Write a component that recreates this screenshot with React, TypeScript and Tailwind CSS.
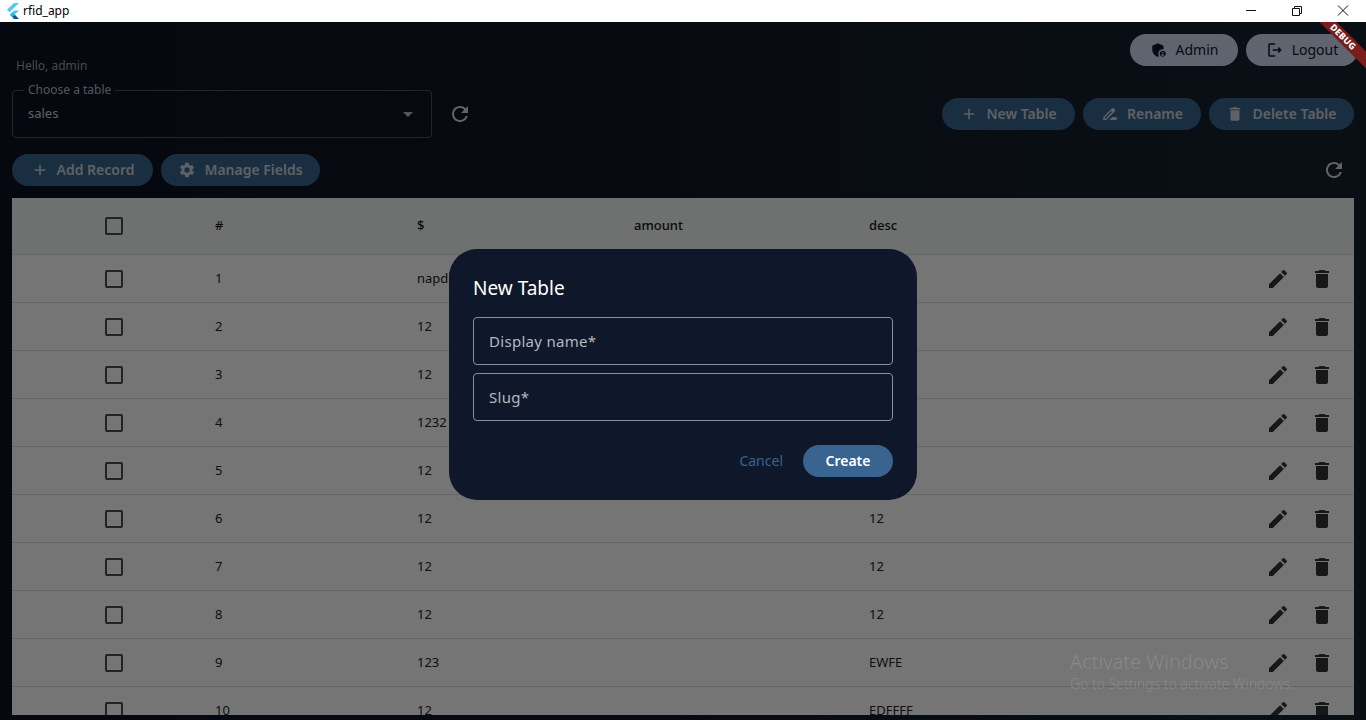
import { MdAdd, MdSettings, MdRefresh, MdEdit, MdDelete, MdOutlineLogout, MdAdminPanelSettings, MdArrowDropDown, MdDriveFileRenameOutline } from 'react-icons/md';

const font = "font-['Noto_Sans',sans-serif]";

const rows: [string, string, string][] = [
  ['1', 'napdi', ''],
  ['2', '12', ''],
  ['3', '12', ''],
  ['4', '1232', ''],
  ['5', '12', ''],
  ['6', '12', '12'],
  ['7', '12', '12'],
  ['8', '12', '12'],
  ['9', '123', 'EWFE'],
  ['10', '12', 'EDFFFF'],
];

function Check() {
  return <div className="w-[18px] h-[18px] rounded-[2px] border-2 border-[#4a4c52]" />;
}

function Fill({ icon, label, w }: { icon: React.ReactNode; label: string; w: string }) {
  return (
    <button className={`h-8 rounded-full bg-[#38648f] text-[#cfd4dc] flex items-center justify-center gap-2 text-sm font-semibold ${w}`}>
      {icon}
      <span>{label}</span>
    </button>
  );
}

function Tonal({ icon, label, w }: { icon: React.ReactNode; label: string; w: string }) {
  return (
    <button className={`h-8 rounded-full bg-[#cfd9ef] text-[#0f172a] flex items-center justify-center gap-2 text-sm ${w}`}>
      {icon}
      <span>{label}</span>
    </button>
  );
}

function Field({ label }: { label: string }) {
  return (
    <div className="h-12 rounded-[4px] border border-[#8a8f99] flex items-center px-[15px] text-[15px] text-[#b4b8c0] tracking-[0.3px]">
      {label}
    </div>
  );
}

function Row({ n, a, d }: { n: string; a: string; d: string }) {
  return (
    <div className="grid grid-cols-[203px_202px_217px_235px_1fr_88px] h-12 shrink-0 items-center border-b border-[#dcdcdc] text-[13px] text-[#1f2127]">
      <div className="flex justify-center"><Check /></div>
      <div>{n}</div>
      <div>{a}</div>
      <div />
      <div>{d}</div>
      <div className="flex items-center gap-5 text-[#303238]">
        <MdEdit size={24} />
        <MdDelete size={24} />
      </div>
    </div>
  );
}

export default function App() {
  return (
    <div className={`h-[720px] w-[1366px] overflow-hidden flex flex-col bg-white ${font}`}>
      <div className="h-[22px] shrink-0 flex items-center bg-white text-black">
        <svg width="16" height="18" viewBox="0 0 16 18" className="ml-[4px]">
          <path d="M10 1h5L5.5 10.2 3 7.8z" fill="#54c5f8" />
          <path d="M15 8.5h-5l-4.2 4.2 2.5 2.4z" fill="#54c5f8" />
          <path d="M5.8 12.7l2.5-2.4 2.6 2.4 -2.6 2.5z" fill="#29b6f6" />
          <path d="M8.3 15.1l2.6-2.4 4.1 4.3h-5z" fill="#01579b" />
        </svg>
        <span className="ml-[3px] text-xs">rfid_app</span>
        <div className="ml-auto flex items-center text-black">
          <svg width="46" height="20" viewBox="0 0 46 20"><path d="M18 9.5h10" stroke="#111" fill="none" /></svg>
          <svg width="46" height="20" viewBox="0 0 46 20"><path d="M18.5 7.5h7v7h-7zM20.5 7.5v-2h7v7h-2" stroke="#111" fill="none" /></svg>
          <svg width="46" height="20" viewBox="0 0 46 20"><path d="M18 4.5l10 10M28 4.5l-10 10" stroke="#111" fill="none" /></svg>
        </div>
      </div>

      <div className="relative flex-1 min-h-0 overflow-hidden bg-[#0f172a] bg-gradient-to-r from-[#0c121f] to-[#172230] flex flex-col">
        <div className="px-3 flex flex-col min-h-0 flex-1">
          <div className="flex justify-between h-[68px] shrink-0">
            <div className="pl-1 pt-[7px]">
              <div className="text-[22px] leading-[30px] font-medium text-[#0f141e]">Dashboard</div>
              <div className="text-xs leading-[14px] text-[#9aa0aa]">Hello, admin</div>
            </div>
            <div className="flex gap-2 pt-3 -mr-1">
              <Tonal w="w-[108px]" icon={<MdAdminPanelSettings size={18} />} label="Admin" />
              <Tonal w="w-[112px]" icon={<MdOutlineLogout size={18} />} label="Logout" />
            </div>
          </div>

          <div className="flex items-center h-12 shrink-0">
            <div className="relative w-[420px] h-12 rounded-[4px] border border-[#50545c] flex items-center px-[15px] text-[13px] text-[#d0d3d8]">
              sales
              <MdArrowDropDown size={24} className="absolute right-[11px] top-[11px] text-[#b8bcc4]" />
              <span className="absolute left-[11px] -top-[8px] px-1 bg-[#0c121f] text-xs leading-[14px] text-[#b8bcc4]">Choose a table</span>
            </div>
            <MdRefresh size={24} className="ml-4 text-[#d8d8d8]" />
            <div className="ml-auto flex gap-2">
              <Fill w="w-[133px]" icon={<MdAdd size={18} />} label="New Table" />
              <Fill w="w-[118px]" icon={<MdDriveFileRenameOutline size={18} />} label="Rename" />
              <Fill w="w-[145px]" icon={<MdDelete size={18} />} label="Delete Table" />
            </div>
          </div>

          <div className="flex items-center gap-2 h-8 mt-4 shrink-0">
            <Fill w="w-[141px]" icon={<MdAdd size={18} />} label="Add Record" />
            <Fill w="w-[159px]" icon={<MdSettings size={18} />} label="Manage Fields" />
            <MdRefresh size={24} className="ml-auto mr-2 text-[#d8d8d8]" />
          </div>

          <div className="mt-3 mb-[5px] flex-1 min-h-0 overflow-hidden bg-white flex flex-col">
            <div className="grid grid-cols-[203px_202px_217px_235px_1fr_88px] h-[57px] shrink-0 items-center bg-[#f2f3f5] border-b border-[#dcdcdc] text-[13px] font-medium text-[#15171c]">
              <div className="flex justify-center"><Check /></div>
              <div>#</div>
              <div>$</div>
              <div>amount</div>
              <div>desc</div>
              <div />
            </div>
            {rows.map((r) => (
              <Row key={r[0]} n={r[0]} a={r[1]} d={r[2]} />
            ))}
          </div>
        </div>

        <div className="absolute inset-0 bg-black/[0.54] flex items-start justify-center">
          <div className="mt-[227px] ml-0 w-[468px] h-[251px] rounded-[28px] bg-[#0f172a] p-6 flex flex-col">
            <div className="text-[19px] leading-[30px] text-white">New Table</div>
            <div className="mt-[14px] flex flex-col gap-2">
              <Field label="Display name*" />
              <Field label="Slug*" />
            </div>
            <div className="mt-6 flex items-center justify-end gap-[20px]">
              <span className="text-sm text-[#38648f]">Cancel</span>
              <button className="w-[90px] h-8 rounded-full bg-[#38648f] text-white text-sm font-semibold">Create</button>
            </div>
          </div>
        </div>

        <div className="absolute right-[56px] top-[628px] w-[240px] text-[#8c8c8c] pointer-events-none">
          <div className="text-xl leading-[24px] font-light opacity-90">Activate Windows</div>
          <div className="text-sm leading-[20px] font-light whitespace-nowrap opacity-90">Go to Settings to activate Windows.</div>
        </div>

        <div className="absolute -right-[37px] top-[9px] w-[120px] h-3 rotate-45 bg-[#7a1c1c] flex items-center justify-center text-[9px] font-extrabold text-white tracking-wide">
          DEBUG
        </div>
      </div>
    </div>
  );
}
